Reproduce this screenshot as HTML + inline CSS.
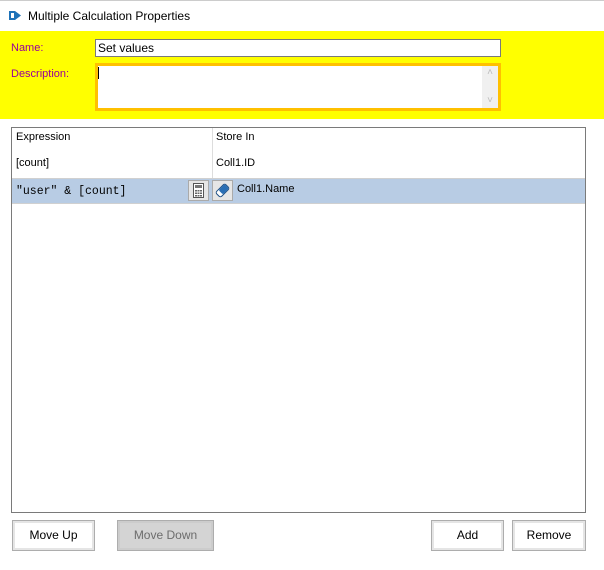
<!DOCTYPE html>
<html><head><style>
*{margin:0;padding:0;box-sizing:border-box}
body{width:604px;height:570px;background:#fff;font-family:"Liberation Sans",sans-serif;font-size:12px;position:relative;overflow:hidden}
.a{position:absolute}
.btn{position:absolute;top:520px;height:31px;border:1px solid #adadad;background:#fff;box-shadow:inset 0 0 0 2px #e5e5e5;text-align:center;line-height:29px;font-size:12px;color:#000}
</style></head><body>
<div class="a" style="left:0;top:0;width:604px;height:1px;background:#ccc"></div>
<svg class="a" style="left:8px;top:9px" width="14" height="13" viewBox="0 0 14 13"><path d="M1 2h6l6 4.5-6 4.5H1z" fill="#1e72b8"/><rect x="3" y="4" width="3" height="5" fill="#fff"/></svg>
<div class="a" style="left:28px;top:9px;font-size:12px;color:#000">Multiple Calculation Properties</div>
<div class="a" style="left:0;top:31px;width:604px;height:88px;background:#ffff00"></div>
<div class="a" style="left:11px;top:42px;color:#990099;font-size:11px">Name:</div>
<div class="a" style="left:11px;top:68px;color:#990099;font-size:11px">Description:</div>
<div class="a" style="left:95px;top:39px;width:406px;height:18px;background:#fff;border:1px solid #7a7a7a;padding:1px 2px;font-size:12px">Set values</div>
<div class="a" style="left:95px;top:63px;width:406px;height:48px;background:#fff;border:3px solid #ffc000"></div>
<div class="a" style="left:98px;top:67px;width:1px;height:12px;background:#000"></div>
<div class="a" style="left:482px;top:66px;width:16px;height:42px;background:#f0f0f0;color:#bbb;font-size:10px;text-align:center;line-height:14px">˄<br><br>˅</div>
<div class="a" style="left:11px;top:127px;width:575px;height:386px;border:1px solid #7a7a7a;background:#fff"></div>
<div class="a" style="left:212px;top:128px;width:1px;height:50px;background:#ddd"></div>
<div class="a" style="left:16px;top:131px;font-size:11px">Expression</div>
<div class="a" style="left:216px;top:131px;font-size:11px">Store In</div>
<div class="a" style="left:16px;top:157px;font-size:11px">[count]</div>
<div class="a" style="left:216px;top:157px;font-size:11px">Coll1.ID</div>
<div class="a" style="left:12px;top:178px;width:573px;height:26px;background:#b8cce4;border-top:1px solid #d0d0d0;border-bottom:1px solid #d0d0d0"></div>
<div class="a" style="left:16px;top:185px;font-family:'Liberation Mono',monospace;font-size:11.5px">"user" &amp; [count]</div>
<div class="a" style="left:188px;top:180px;width:21px;height:21px;background:#e6e6e6;border:1px solid #aaa"></div>
<svg class="a" style="left:193px;top:183px" width="11" height="15" viewBox="0 0 11 15"><rect x="0.5" y="0.5" width="10" height="14" fill="#fff" stroke="#555"/><rect x="2" y="2" width="7" height="3" fill="#777"/><g fill="#666"><rect x="2" y="7" width="2" height="1.5"/><rect x="4.5" y="7" width="2" height="1.5"/><rect x="7" y="7" width="2" height="1.5"/><rect x="2" y="9.5" width="2" height="1.5"/><rect x="4.5" y="9.5" width="2" height="1.5"/><rect x="7" y="9.5" width="2" height="1.5"/><rect x="2" y="12" width="2" height="1.5"/><rect x="4.5" y="12" width="2" height="1.5"/><rect x="7" y="12" width="2" height="1.5"/></g></svg>
<div class="a" style="left:212px;top:180px;width:21px;height:21px;background:#e6e6e6;border:1px solid #aaa"></div>
<svg class="a" style="left:215px;top:183px" width="15" height="15" viewBox="0 0 15 15"><g transform="rotate(-45 7.5 7.5)"><rect x="1" y="4" width="13" height="7" rx="2" fill="#fff" stroke="#1d4f85"/><rect x="5" y="4.5" width="8.5" height="6" rx="1.5" fill="#2a6fb5"/></g></svg>
<div class="a" style="left:237px;top:183px;font-size:11px">Coll1.Name</div>
<div class="btn" style="left:12px;width:83px">Move Up</div>
<div class="btn" style="left:117px;width:97px;background:#d4d4d4;box-shadow:inset 0 0 0 2px #cccccc;color:#6d6d6d">Move Down</div>
<div class="btn" style="left:431px;width:73px">Add</div>
<div class="btn" style="left:512px;width:74px">Remove</div>
</body></html>
